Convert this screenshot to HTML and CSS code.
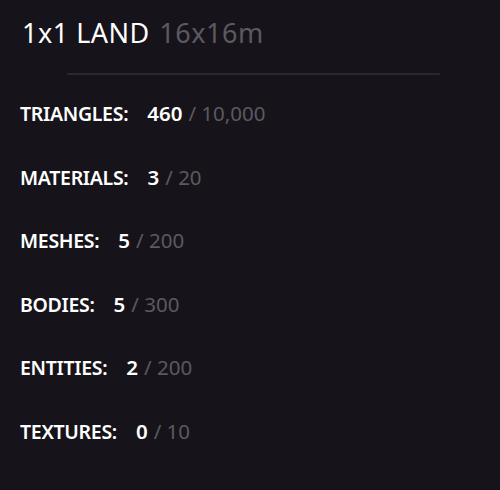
FILE: index.html
```html
<!DOCTYPE html>
<html>
<head>
<meta charset="utf-8">
<link rel="stylesheet" href="styles.css">
</head>
<body>
<div class="panel">
  <h1 class="title">1x1 LAND <span class="size">16x16m</span></h1>
  <div class="divider"></div>
  <ul class="stats">
    <li class="stat"><span class="label">TRIANGLES:</span><span class="value">460</span><span class="limit">/ 10,000</span></li>
    <li class="stat"><span class="label">MATERIALS:</span><span class="value">3</span><span class="limit">/ 20</span></li>
    <li class="stat"><span class="label">MESHES:</span><span class="value">5</span><span class="limit">/ 200</span></li>
    <li class="stat"><span class="label">BODIES:</span><span class="value">5</span><span class="limit">/ 300</span></li>
    <li class="stat"><span class="label">ENTITIES:</span><span class="value">2</span><span class="limit">/ 200</span></li>
    <li class="stat"><span class="label">TEXTURES:</span><span class="value">0</span><span class="limit">/ 10</span></li>
  </ul>
</div>
</body>
</html>
```
FILE: styles.css
```css
html, body {
  margin: 0;
  padding: 0;
  background: #16141a;
  width: 500px;
  height: 490px;
  overflow: hidden;
}
.panel {
  font-family: "Noto Sans", "Open Sans", sans-serif;
  padding: 15px 20px 0 20px;
}
.title {
  margin: 0 0 0 2px;
  font-size: 27px;
  font-weight: 400;
  line-height: 36px;
  letter-spacing: 0.5px;
  color: #ffffff;
}
.size {
  color: #5c5960;
  margin-left: 2px;
}
.divider {
  margin: 22px 40px 0 47px;
  height: 2px;
  border-radius: 1px;
  background: #2a272f;
}
.stats {
  list-style: none;
  margin: 26px 0 0 0;
  padding: 0;
  display: flex;
  flex-direction: column;
  gap: 38.6px;
}
.stat {
  display: flex;
  align-items: baseline;
  font-size: 19.5px;
  line-height: 24px;
}
.label {
  color: #ffffff;
  font-weight: 600;
  letter-spacing: -0.3px;
  margin-right: 19px;
}
.value {
  color: #ffffff;
  font-weight: 600;
  font-size: 20.5px;
  margin-right: 6px;
}
.limit {
  color: #5c5960;
  font-size: 20.5px;
}
```
